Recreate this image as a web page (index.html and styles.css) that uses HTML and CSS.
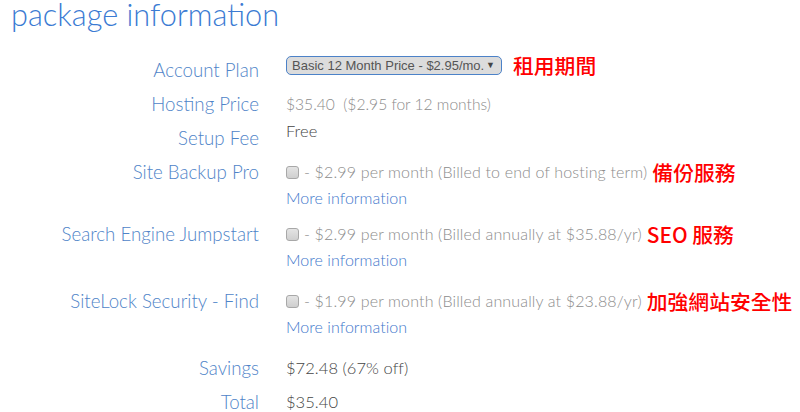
FILE: index.html
```html
<!DOCTYPE html>
<html>
<head>
<meta charset="utf-8">
<link rel="stylesheet" href="styles.css">
</head>
<body>
<h1 class="title">package information</h1>
<div class="info">
  <div class="row">
    <div class="label">Account Plan</div>
    <div class="value plan">
      <div class="select">Basic 12 Month Price - $2.95/mo.<span class="arrow">▼</span></div>
      <span class="note">租用期間</span>
    </div>
  </div>
  <div class="row">
    <div class="label">Hosting Price</div>
    <div class="value light tight">$35.40&nbsp; ($2.95 for 12 months)</div>
  </div>
  <div class="row">
    <div class="label">Setup Fee</div>
    <div class="value dark up">Free</div>
  </div>
  <div class="row addon first">
    <div class="label">Site Backup Pro</div>
    <div class="value">
      <div class="line"><span class="check"></span><span class="light">- $2.99 per month (Billed to end of hosting term)</span><span class="note">備份服務</span></div>
      <a class="more">More information</a>
    </div>
  </div>
  <div class="row addon">
    <div class="label">Search Engine Jumpstart</div>
    <div class="value">
      <div class="line"><span class="check"></span><span class="light">- $2.99 per month (Billed annually at $35.88/yr)</span><span class="note">SEO 服務</span></div>
      <a class="more">More information</a>
    </div>
  </div>
  <div class="row addon last">
    <div class="label">SiteLock Security - Find</div>
    <div class="value">
      <div class="line"><span class="check"></span><span class="light">- $1.99 per month (Billed annually at $23.88/yr)</span><span class="note">加強網站安全性</span></div>
      <a class="more">More information</a>
    </div>
  </div>
  <div class="row">
    <div class="label">Savings</div>
    <div class="value dark">$72.48 (67% off)</div>
  </div>
  <div class="row">
    <div class="label">Total</div>
    <div class="value dark">$35.40</div>
  </div>
</div>
</body>
</html>
```

FILE: styles.css
```css
html, body {
  margin: 0;
  padding: 0;
  background: #fff;
}
body {
  font-family: Lato, "Noto Sans CJK TC", sans-serif;
  overflow: hidden;
}
.title {
  margin: 0;
  padding: 0 0 0 11px;
  font-size: 30.7px;
  font-weight: 300;
  line-height: 30px;
  color: #3b7bd3;
  height: 57px;
}
.info {
  display: flex;
  flex-direction: column;
}
.row {
  display: grid;
  grid-template-columns: 259px 1fr;
  column-gap: 27px;
  align-items: start;
  height: 34px;
}
.row.addon {
  height: 67px;
}
.row.first {
  height: 62px;
}
.row.last {
  height: 67px;
}
.label {
  text-align: right;
  font-size: 18.7px;
  font-weight: 300;
  line-height: 26px;
  color: #4f84c8;
}
.value {
  font-size: 16px;
  line-height: 26px;
  font-weight: 300;
  letter-spacing: 0.15px;
}
.tight {
  letter-spacing: 0;
  font-size: 15.6px;
}
.light {
  color: #8c8c8c;
}
.dark {
  color: #444;
  font-weight: 300;
  font-size: 16.5px;
  letter-spacing: 0.05px;
}
.up {
  margin-top: -7px;
}
.plan {
  display: flex;
  align-items: center;
  margin-top: -5px;
  letter-spacing: 0;
}
.select {
  box-sizing: border-box;
  width: 216px;
  height: 19px;
  border: 1px solid #4c82c8;
  border-radius: 5px;
  background: #dcdcdc;
  font-family: "Liberation Sans", Arial, sans-serif;
  font-size: 13px;
  font-weight: 400;
  line-height: 17px;
  color: #555;
  padding-left: 5px;
  display: flex;
  justify-content: space-between;
  white-space: nowrap;
}
.arrow {
  font-size: 9px;
  padding-right: 6px;
  color: #444;
}
.note {
  font-family: "Noto Sans CJK TC", sans-serif;
  font-weight: 500;
  font-size: 20.8px;
  color: #f00;
  margin-left: 5px;
  line-height: 26px;
  letter-spacing: 0;
}
.plan .note {
  margin-left: 11px;
}
.line {
  display: flex;
  align-items: center;
  white-space: nowrap;
}
.check {
  box-sizing: border-box;
  width: 13px;
  height: 13px;
  border: 1px solid #a8a8a8;
  border-radius: 3px;
  background: linear-gradient(#e4e4e4, #cfcfcf);
  margin-right: 5px;
  flex: none;
}
.more {
  display: block;
  color: #3f78cc;
  font-weight: 300;
  font-size: 16px;
  line-height: 24px;
  margin-top: 1px;
  letter-spacing: 0.05px;
}
```
